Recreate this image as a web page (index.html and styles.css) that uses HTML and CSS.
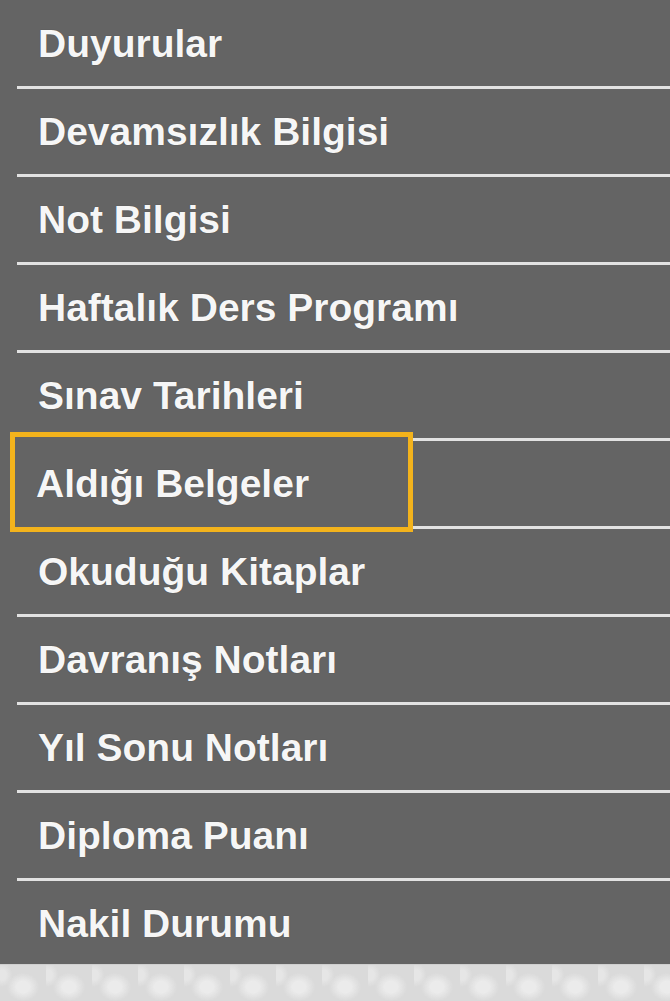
FILE: index.html
```html
<!DOCTYPE html>
<html lang="tr">
<head>
    <meta charset="UTF-8">
    <meta name="viewport" content="width=device-width, initial-scale=1.0">
    <title>Öğrenci Menüsü</title>
    <link rel="stylesheet" href="styles.css">
</head>
<body>

    <nav class="side-menu">
        <ul>
            <li><a href="#">Duyurular</a></li>
            <li><a href="#">Devamsızlık Bilgisi</a></li>
            <li><a href="#">Not Bilgisi</a></li>
            <li><a href="#">Haftalık Ders Programı</a></li>
            <li><a href="#">Sınav Tarihleri</a></li>
            <li class="active"><a href="#">Aldığı Belgeler</a></li>
            <li><a href="#">Okuduğu Kitaplar</a></li>
            <li><a href="#">Davranış Notları</a></li>
            <li><a href="#">Yıl Sonu Notları</a></li>
            <li><a href="#">Diploma Puanı</a></li>
            <li><a href="#">Nakil Durumu</a></li>
        </ul>
    </nav>

    <div class="pattern"></div>

</body>
</html>
```

FILE: styles.css
```css
body {
    margin: 0;
    font-family: 'Liberation Sans', Arial, sans-serif;
    background-color: #dcdcdc;
}
.side-menu {
    background-color: #646464;
    padding-top: 1px;
}
.side-menu ul {
    list-style: none;
    margin: 0;
    padding: 0 0 0 17px;
}
.side-menu li {
    position: relative;
    height: 85px;
    border-bottom: 3px solid #e2e2e2;
}
.side-menu li:last-child {
    height: 83px;
    border-bottom: none;
}
.side-menu a {
    position: relative;
    display: block;
    padding-left: 21px;
    line-height: 85px;
    font-size: 39px;
    font-weight: bold;
    color: #f6f6f6;
    text-decoration: none;
    white-space: nowrap;
    text-shadow: 0 0 1px rgba(0, 0, 0, 0.4);
}
/* selected item gets a yellow frame that hides the separators behind it */
.side-menu li.active::before {
    content: '';
    position: absolute;
    left: -7px;
    top: -9px;
    width: 403px;
    height: 100px;
    box-sizing: border-box;
    border: 5px solid #f3b31c;
    background-color: #646464;
}
.side-menu li.active a {
    padding-left: 19px;
}
.pattern {
    height: 40px;
    background-color: #dadada;
    background-image:
        radial-gradient(ellipse 16px 14px at 50% 55%, #ebebeb 40%, rgba(235, 235, 235, 0) 100%),
        radial-gradient(ellipse 10px 12px at 5% 25%, #e6e6e6 40%, rgba(230, 230, 230, 0) 100%);
    background-size: 46px 40px, 46px 40px;
    border-top: 1px solid #cfcfcf;
}
```
